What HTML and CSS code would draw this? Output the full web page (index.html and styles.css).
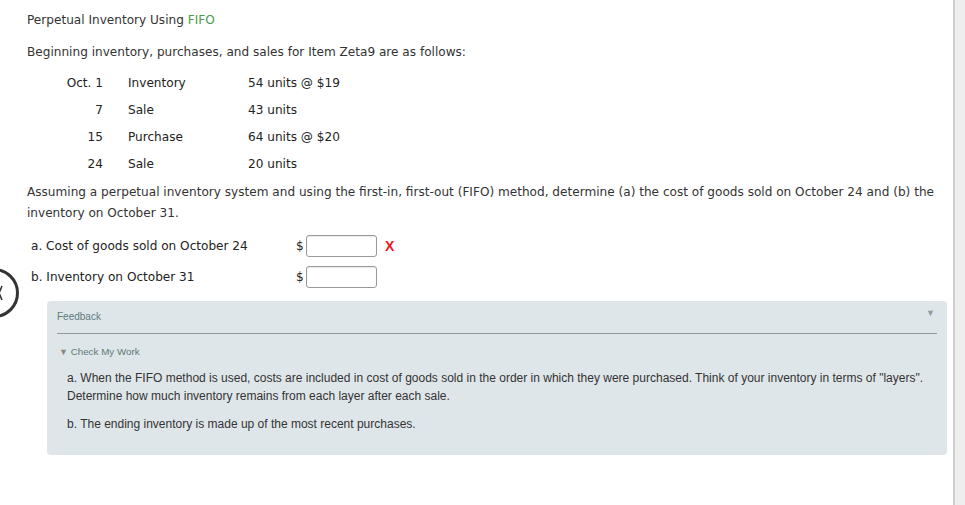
FILE: index.html
```html
<!DOCTYPE html>
<html lang="en">
<head>
<meta charset="utf-8">
<title>Perpetual Inventory Using FIFO</title>
<link rel="stylesheet" href="styles.css">
</head>
<body>
<div class="page">
  <div class="main">
    <p class="title">Perpetual Inventory Using <span class="green">FIFO</span></p>
    <p class="intro">Beginning inventory, purchases, and sales for Item Zeta9 are as follows:</p>
    <div class="data">
      <span class="date">Oct. 1</span><span>Inventory</span><span>54 units @ $19</span>
      <span class="date">7</span><span>Sale</span><span>43 units</span>
      <span class="date">15</span><span>Purchase</span><span>64 units @ $20</span>
      <span class="date">24</span><span>Sale</span><span>20 units</span>
    </div>
    <p class="question">Assuming a perpetual inventory system and using the first-in, first-out (FIFO) method, determine (a) the cost of goods sold on October 24 and (b) the inventory on October 31.</p>
    <div class="answers">
      <div class="answer-row">
        <span class="label">a. Cost of goods sold on October 24</span>
        <span class="dollar">$</span><span class="input"></span><span class="wrong">X</span>
      </div>
      <div class="answer-row">
        <span class="label">b. Inventory on October 31</span>
        <span class="dollar">$</span><span class="input"></span><span class="wrong"></span>
      </div>
    </div>
    <div class="feedback">
      <div class="fb-head">
        <span class="fb-title">Feedback</span>
        <span class="fb-toggle">&#9660;</span>
      </div>
      <div class="fb-body">
        <p class="cmw"><span class="cmw-arrow">&#9660;</span> Check My Work</p>
        <p class="hint">a. When the FIFO method is used, costs are included in cost of goods sold in the order in which they were purchased. Think of your inventory in terms of "layers". Determine how much inventory remains from each layer after each sale.</p>
        <p class="hint">b. The ending inventory is made up of the most recent purchases.</p>
      </div>
    </div>
  </div>
  <div class="scrollbar"></div>
  <div class="nav-circle">
    <svg width="5" height="16" viewBox="0 0 5 16"><polyline points="4,1 1,8 4,15" fill="none" stroke="#333" stroke-width="1.6"/></svg>
  </div>
</div>
</body>
</html>
```
FILE: styles.css
```css
html, body {
  margin: 0;
  padding: 0;
  background: #fff;
}
body {
  font-family: "DejaVu Sans", Verdana, sans-serif;
  color: #333;
  overflow: hidden;
}
.page {
  position: relative;
  display: flex;
  width: 965px;
  height: 505px;
  overflow: hidden;
}
.main {
  flex: 1;
  padding: 10px 6px 0 27px;
  font-size: 12.1px;
}
p { margin: 0; }
.title {
  line-height: 21px;
}
.green { color: #4a9a4a; }
.intro {
  line-height: 21px;
  margin-top: 11px;
}
.data {
  display: grid;
  grid-template-columns: 76px 95px auto;
  column-gap: 25px;
  grid-auto-rows: 27px;
  align-items: center;
  margin-top: 6px;
  color: #222;
}
.data .date { text-align: right; }
.question {
  line-height: 21px;
  margin-top: 5px;
}
.answers {
  margin-top: 6px;
  padding-left: 4px;
}
.answer-row {
  display: flex;
  align-items: center;
  height: 31px;
  color: #222;
}
.label { width: 265px; }
.dollar { width: 10px; }
.input {
  width: 69px;
  height: 20px;
  border: 1px solid #999;
  border-radius: 3px;
  background: #fff;
  box-shadow: inset 0 1px 1px rgba(0,0,0,0.08);
}
.wrong {
  margin-left: 8px;
  color: #e8171e;
  font-family: "Liberation Sans", Arial, sans-serif;
  font-weight: bold;
  font-size: 14px;
}
.feedback {
  margin: 9px 0 0 20px;
  background: #dfe6e9;
  border-radius: 4px;
  padding: 0 10px;
  height: 154px;
  font-family: "Liberation Sans", Arial, sans-serif;
}
.fb-head {
  display: flex;
  justify-content: space-between;
  align-items: center;
  height: 33px;
  border-bottom: 1px solid #8f9a9c;
  padding-top: 1px;
  box-sizing: border-box;
}
.fb-title {
  font-size: 10px;
  color: #5e7a7a;
  margin-top: -2px;
}
.fb-toggle {
  font-size: 9px;
  color: #999;
  margin-top: -9px;
  margin-right: 2px;
}
.fb-body { padding-top: 11px; }
.cmw {
  font-size: 9.8px;
  color: #5e7a7a;
  line-height: 14px;
  padding-left: 2px;
}
.cmw-arrow { font-size: 9px; color: #888; }
.hint {
  font-size: 12px;
  line-height: 18px;
  color: #333;
  padding-left: 10px;
  margin-top: 10px;
}
.hint + .hint { margin-top: 10px; }
.scrollbar {
  width: 10px;
  border-left: 2px solid #cdcdcd;
  background: #eeeeee;
}
.nav-circle {
  position: absolute;
  left: -31px;
  top: 268px;
  height: 44px;
  width: 31px;
  padding-right: 13px;
  border: 3px solid #333;
  border-radius: 50%;
  display: flex;
  align-items: center;
  justify-content: flex-end;
  box-sizing: content-box;
}
```
